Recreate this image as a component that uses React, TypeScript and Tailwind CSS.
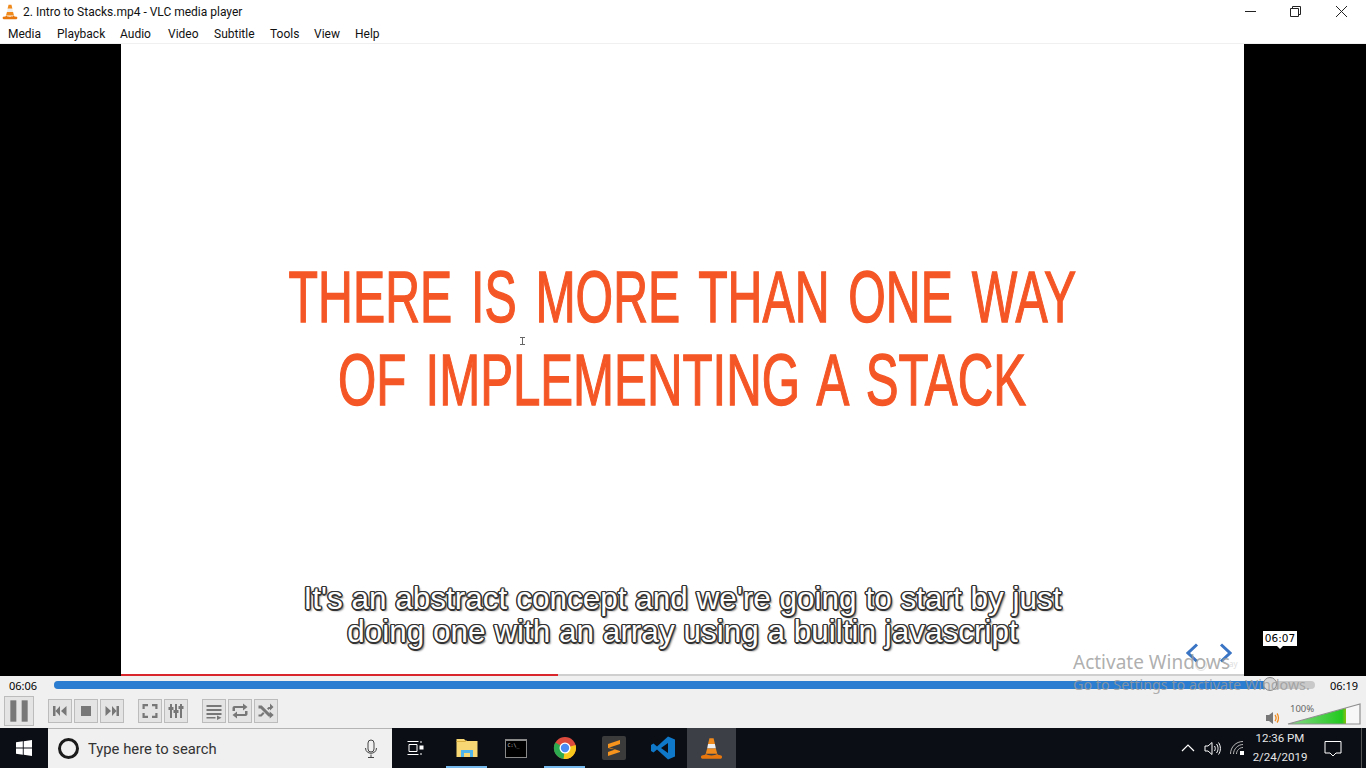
const UI = "font-['Roboto','Noto_Sans',sans-serif]"
const NOTO = "font-['Noto_Sans','Open_Sans',sans-serif]"

const MENU = [
  { label: 'Media', cls: 'w-[49px]' },
  { label: 'Playback', cls: 'w-[63px]' },
  { label: 'Audio', cls: 'w-[48px]' },
  { label: 'Video', cls: 'w-[46px]' },
  { label: 'Subtitle', cls: 'w-[56px]' },
  { label: 'Tools', cls: 'w-[44px]' },
  { label: 'View', cls: 'w-[41px]' },
  { label: 'Help', cls: 'w-[40px]' },
]

function Cone({ size }: { size: number }) {
  return (
    <svg width={size} height={size} viewBox="0 0 20 20">
      <path d="M8.2 1 L11.8 1 L13 6 L7 6 Z" fill="#f08a1d" />
      <path d="M7 6 L13 6 L13.8 10 L6.2 10 Z" fill="#eeeeee" />
      <path d="M6.2 10 L13.8 10 L15 14.5 L5 14.5 Z" fill="#f08a1d" />
      <path d="M5 14.5 C7 16.5 13 16.5 15 14.5 L15.6 15.5 L18.5 16 C19.5 16.6 19.5 18.6 18 19 L2 19 C0.5 18.6 0.5 16.6 1.5 16 L4.4 15.5 Z" fill="#e8780e" />
    </svg>
  )
}

function Btn({ cls, children }: { cls: string; children: React.ReactNode }) {
  return (
    <div className={`flex items-center justify-center border border-[#bcbcbc] bg-[#e4e4e4] ${cls}`}>
      {children}
    </div>
  )
}

function Ico({ children, w = 18, h = 18 }: { children: React.ReactNode; w?: number; h?: number }) {
  return (
    <svg width={w} height={h} viewBox="0 0 18 18" fill="#777777" stroke="none">
      {children}
    </svg>
  )
}

function Controls() {
  const small = 'w-6 h-6'
  return (
    <div className="flex h-[34px] items-start">
      <div className="ml-1 mr-[14px] mt-[2px]">
        <Btn cls="w-[30px] h-[30px]">
          <Ico w={24} h={24}>
            <rect x="2.5" y="1" width="4.5" height="16" />
            <rect x="11" y="1" width="4.5" height="16" />
          </Ico>
        </Btn>
      </div>
      <div className="mt-[5px] flex gap-0.5">
        <Btn cls={small}>
          <Ico><path d="M2 4h2.5v10H2z M9 4v10L4.5 9z M15.5 4v10L10 9z" /></Ico>
        </Btn>
        <Btn cls={small}>
          <Ico><rect x="4" y="4" width="10" height="10" /></Ico>
        </Btn>
        <Btn cls={small}>
          <Ico><path d="M2.5 4v10L8 9z M9 4v10l4.5-5z M13.5 4H16v10h-2.5z" /></Ico>
        </Btn>
      </div>
      <div className="ml-[14px] mt-[5px] flex gap-0.5">
        <Btn cls={small}>
          <Ico><path d="M1.500 2h5.500v2.200H3.700V7H1.500z M11 2h5.500v5h-2.200V4.200H11z M1.500 11h2.200v2.800H7V16H1.500z M14.300 11h2.200v5H11v-2.200h3.300z" /></Ico>
        </Btn>
        <Btn cls={small}>
          <Ico>
            <path d="M3 8h2v8H3z M3 2h2v3H3z M1.500 5h5v3h-5z M8 11h2v5H8z M8 2h2v6H8z M6.500 8h5v3h-5z M13 7h2v9h-2z M13 2h2v2h-2z M11.500 4h5v3h-5z" />
          </Ico>
        </Btn>
      </div>
      <div className="ml-[14px] mt-[5px] flex gap-0.5">
        <Btn cls={small}>
          <Ico><path d="M1.500 3h15v2h-15z M1.500 7h15v2h-15z M1.500 11h15v2h-15z M1.500 15h9v1.500h-9z M12 13.500l4.500 2.200-4.500 2.200z" /></Ico>
        </Btn>
        <Btn cls={small}>
          <Ico>
            <path d="M1.500 9V6C1.500 4.800 2.300 4 3.500 4H12V1.500L16.500 5 12 8.500V6H4v3z M16.500 9v3c0 1.200-.8 2-2 2H6v2.500L1.500 13 6 9.500V12h8V9z" />
          </Ico>
        </Btn>
        <Btn cls={small}>
          <Ico>
            <path d="M1.500 3.500h3.200l8 8V9.500l4 3.500-4 3.500v-2h-1.200l-8-8H1.500z M1.500 12.500h2l2.500-2.500 1.500 1.500-3 3h-3z M10 6.500l1.500-1.500H13V1.500l3.500 3.500L13 8.500V7h-.7L11.500 8z" />
          </Ico>
        </Btn>
      </div>
      <div className="flex-1" />
      <div className="relative mr-[5px] mt-[9px] flex items-end gap-[6px]">
        <svg width="16" height="16" viewBox="0 0 16 16" className="mb-[-1px]">
          <path d="M1 5h3l4-3v12l-4-3H1z" fill="#777777" />
          <path d="M10 5c1.200 1.600 1.200 4.400 0 6 M12 3.500c2 2.500 2 6.500 0 9" fill="none" stroke="#f08a1d" strokeWidth="1.300" />
        </svg>
        <div className="relative">
          <svg width="74" height="22" viewBox="0 0 74 22" className="block">
            <defs>
              <linearGradient id="vol" x1="0" x2="1" y1="0" y2="0">
                <stop offset="0" stopColor="#8ad98a" />
                <stop offset="0.93" stopColor="#22c91f" />
                <stop offset="1" stopColor="#8abf10" />
              </linearGradient>
            </defs>
            <path d="M1 21 L73 1 L73 21 Z" fill="#f7f7f7" />
            <path d="M1 21 L59 5 L59 21 Z" fill="url(#vol)" />
            <path d="M1 21 L73 1 L73 21 Z" fill="none" stroke="#8f8f8f" strokeWidth="1.200" />
          </svg>
          <div className="absolute top-[1px] left-[3px] text-[9.500px] leading-none text-[#666666]">100%</div>
        </div>
      </div>
    </div>
  )
}

function TaskIcon({ cls = 'w-[49px]', bar = false, children }: { cls?: string; bar?: boolean; children: React.ReactNode }) {
  return (
    <div className={`relative flex h-10 items-center justify-center ${cls}`}>
      {children}
      {bar && <div className="absolute inset-x-1 bottom-0 h-[2px] bg-[#76b9ed]" />}
    </div>
  )
}

function Taskbar() {
  return (
    <div className={`flex h-10 items-stretch bg-[#0b0e15] text-white ${UI}`}>
      <div className="flex w-12 items-center justify-center">
        <svg width="16" height="16" viewBox="0 0 16 16" fill="#ffffff">
          <path d="M0 2.300 L6.800 1.300 V7.500 H0 Z M7.700 1.200 L16 0 V7.500 H7.700 Z M0 8.500 H6.800 V14.700 L0 13.700 Z M7.700 8.500 H16 V16 L7.700 14.800 Z" />
        </svg>
      </div>
      <div className="flex w-[344px] items-center border-t border-[#b4b4b4] bg-[#f0f0f0] text-[#333333]">
        <div className="ml-[10px] h-[21px] w-[21px] rounded-full border-[3px] border-[#1b1b1b]" />
        <span className="ml-[9px] pt-[1px] text-[14.800px]">Type here to search</span>
        <div className="flex-1" />
        <svg width="14" height="20" viewBox="0 0 14 20" fill="none" stroke="#444444" strokeWidth="1" className="mr-[14px]">
          <rect x="4" y="1" width="6" height="12" rx="3" />
          <path d="M1.500 9c0 7 11 7 11 0 M7 15.500v3 M4 18.500h6" />
        </svg>
      </div>
      <div className="flex">
        <TaskIcon cls="w-[50px]">
          <svg width="18" height="16" viewBox="0 0 18 16" fill="none" stroke="#ffffff" strokeWidth="1" className="mr-[2px]">
            <path d="M0.500 1.500h11 M0.500 14.500h11 M2 4.500h8v7H2z M14 1v2 M14 13v2" />
            <rect x="13" y="6" width="3" height="3" fill="#ffffff" />
          </svg>
        </TaskIcon>
        <TaskIcon bar>
          <svg width="22" height="20" viewBox="0 0 22 20">
            <path d="M0.500 1H8l2 2h11.500v16H0.500z" fill="#f7d774" />
            <path d="M0.500 3.500H9l1.500-1" fill="none" stroke="#d9ad3e" />
            <path d="M5 12h12v7h-3v-4H8v4H5z" fill="#4fb4ea" />
          </svg>
        </TaskIcon>
        <TaskIcon>
          <div className="h-[19px] w-[22px] border border-[#8a8a8a] border-t-[2px] bg-black pl-[2px] font-['DejaVu_Sans_Mono',monospace] text-[5px] leading-[8px] text-[#cccccc]">
            C:\_
          </div>
        </TaskIcon>
        <TaskIcon bar>
          <svg width="24" height="24" viewBox="0 0 24 24">
            <circle cx="12" cy="12" r="11" fill="#dd4b3e" />
            <path d="M12 12 L22.600 9 A11 11 0 0 1 10 22.800 Z" fill="#f8c91c" />
            <path d="M12 12 L10.500 22.900 A11 11 0 0 1 2.300 6.500 Z" fill="#2da94f" />
            <circle cx="12" cy="12" r="5.500" fill="#ffffff" />
            <circle cx="12" cy="12" r="4.200" fill="#4c8bf5" />
          </svg>
        </TaskIcon>
        <TaskIcon>
          <div className="flex h-6 w-6 items-center justify-center rounded-[2px] bg-[#3b3b3b]">
            <svg width="14" height="18" viewBox="0 0 14 18" fill="#f6941d">
              <path d="M13 1v4L1 9V5z M1 8l12 4v1L1 17v-4l7-2.500L1 9z" />
            </svg>
          </div>
        </TaskIcon>
        <TaskIcon>
          <svg width="24" height="24" viewBox="0 0 24 24">
            <path d="M17 0.500 L24 3.500 V20.500 L17 23.500 L6 13.500 L2.500 16.500 L0 15 V9 L2.500 7.500 L6 10.500 Z M17 7 L10 12 L17 17 Z" fill="#0f78c9" fillRule="evenodd" />
          </svg>
        </TaskIcon>
        <TaskIcon cls="w-[49px] bg-[#3c3f46]">
          <Cone size={23} />
        </TaskIcon>
      </div>
      <div className="flex-1" />
      <div className="flex items-center">
        <svg width="14" height="8" viewBox="0 0 14 8" fill="none" stroke="#ffffff" strokeWidth="1.200" className="mr-[9px]">
          <path d="M1 7l6-6 6 6" />
        </svg>
        <svg width="17" height="15" viewBox="0 0 17 15" fill="none" stroke="#ffffff" strokeWidth="1" className="mr-[9px]">
          <path d="M1 5h3l4-3.500v12L4 10H1z M10.500 5c1 1.500 1 3.500 0 5 M12.500 3c2 2.500 2 6.500 0 9 M14.500 1.500c2.500 3.500 2.500 8.500 0 12" />
        </svg>
        <svg width="14" height="14" viewBox="0 0 14 14" fill="none" stroke="#b8b8b8" strokeWidth="1" className="mr-[3px]">
          <path d="M0.500 13C0.500 6 6 0.500 13 0.500 M3.500 13c0-5 4.500-9.500 9.500-9.500 M6.500 13c0-3.500 3-6.500 6.500-6.500" />
          <rect x="10" y="10" width="4" height="4" fill="#ffffff" stroke="none" />
        </svg>
        <div className="w-[66px] text-center text-[11.500px] leading-[19px] text-[#e6e6e6]">
          <div>12:36 PM</div>
          <div>2/24/2019</div>
        </div>
        <svg width="18" height="17" viewBox="0 0 18 17" fill="none" stroke="#ffffff" strokeWidth="1" className="ml-[11px]">
          <path d="M1 1.500h16v11.500h-5l-3 3-3-3H1z" />
        </svg>
        <div className="ml-[19px] h-10 w-[1px] bg-[#555555]" />
        <div className="w-[4px]" />
      </div>
    </div>
  )
}

export default function App() {
  return (
    <div className="flex h-[768px] w-[1366px] flex-col overflow-hidden bg-white text-black">
      {/* title bar */}
      <div className={`flex h-[22px] items-center bg-white pt-[1px] text-[12px] text-[#111111] ${UI}`}>
        <div className="ml-[2px] mr-[5px]">
          <Cone size={16} />
        </div>
        <span>2. Intro to Stacks.mp4 - VLC media player</span>
        <div className="flex-1" />
        <svg width="11" height="1" className="mr-[34px]"><rect width="11" height="1" fill="#222222" /></svg>
        <svg width="11" height="11" viewBox="0 0 11 11" fill="none" stroke="#222222" className="mr-[35px]">
          <path d="M0.500 2.500h8v8h-8z M2.500 2.500v-2h8v8h-2" />
        </svg>
        <svg width="11" height="11" viewBox="0 0 11 11" stroke="#222222" className="mr-[19px]">
          <path d="M0 0l11 11 M11 0L0 11" />
        </svg>
      </div>
      {/* menu */}
      <div className={`flex h-[22px] items-center border-b border-[#f0f0f0] pl-2 pt-[2px] text-[12px] text-[#111111] ${UI}`}>
        {MENU.map(m => (
          <span key={m.label} className={m.cls}>{m.label}</span>
        ))}
      </div>

      {/* video */}
      <div className="relative flex h-[632px] bg-black">
        <div className="w-[121px]" />
        <div className="relative w-[1123px] bg-white">
          <div className="flex flex-col items-center whitespace-nowrap pt-[212px] font-['Liberation_Sans',sans-serif] text-[71.500px] leading-[83px] text-[#f55625] [-webkit-text-stroke:1.300px_#f55625] [word-spacing:8px]">
            <div className="scale-x-[0.675]">THERE IS MORE THAN ONE WAY</div>
            <div className="scale-x-[0.688]">OF IMPLEMENTING A STACK</div>
          </div>
          <svg width="5" height="8" viewBox="0 0 5 8" stroke="#666666" fill="none" className="absolute left-[399px] top-[293px]">
            <path d="M0 0.500h5 M0 7.500h5 M2.500 0.500v7" />
          </svg>
          <div className="absolute inset-x-0 bottom-[28px] text-center font-['Liberation_Sans',sans-serif] text-[31.500px] leading-[33px] text-white [text-shadow:-1.500px_0_0_#333,1.500px_0_0_#333,0_-1.500px_0_#333,0_1.500px_0_#333,-1px_-1px_0_#333,1px_-1px_0_#333,-1px_1px_0_#333,1px_1px_0_#333,2px_2px_2px_#666]">
            <div>It's an abstract concept and we're going to start by just</div>
            <div>doing one with an array using a builtin javascript</div>
          </div>
          <div className="absolute bottom-0 left-0 flex h-[2px] w-full bg-[#cfcfcf]">
            <div className="w-[437px] bg-[#d9262c]" />
          </div>
          <svg width="46" height="20" viewBox="0 0 46 20" fill="none" stroke="#3a74c4" strokeWidth="3" className="absolute left-[1065px] top-[599px]">
            <path d="M11 1.500 L2 10 L11 18.500 M35 1.500 L44 10 L35 18.500" />
          </svg>
          <div className="absolute left-[1074px] top-[615px] h-3 w-3 rounded-full border border-[#e2e2e2]" />
          <div className="absolute left-[1108px] top-[616px] text-[8px] leading-none text-[#dddddd]">ay</div>
        </div>
        <div className="flex-1" />
        <div className="absolute left-[1263px] top-[587px] w-[34px] bg-white text-center font-['DejaVu_Sans',sans-serif] text-[10.500px] leading-[15px]">
          06:07
          <div className="absolute -bottom-[3px] left-[14px] h-0 w-0 border-x-[3px] border-t-[3px] border-x-transparent border-t-white" />
        </div>
      </div>

      {/* controls */}
      <div className={`relative flex h-[52px] flex-col bg-[#f0f0f0] text-[11px] text-black ${NOTO}`}>
        <div className="flex h-[18px] items-end">
          <span className="ml-[9px] w-[45px]">06:06</span>
          <div className="relative mb-[5px] h-2 w-[1261px] rounded-full bg-[#c9c9c9]">
            <div className="h-2 w-[1216px] rounded-l-full bg-[#2a7dd1]" />
            <div className="absolute left-[1209px] top-[-4px] h-[14px] w-[14px] rounded-full border border-[#8a8a8a] bg-[#d8d8d8]" />
          </div>
          <span className="ml-[15px]">06:19</span>
        </div>
        <Controls />
      </div>

      <Taskbar />

      {/* activation watermark */}
      <div className={`pointer-events-none absolute left-[1073px] top-[650px] text-[#9a9a9a]/80 ${NOTO}`}>
        <div className="text-[19px] leading-[24px]">Activate Windows</div>
        <div className="text-[14.300px] leading-[22px]">Go to Settings to activate Windows.</div>
      </div>
    </div>
  )
}
